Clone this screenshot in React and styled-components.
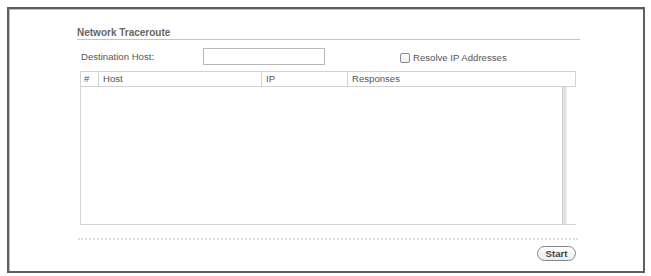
import React from "react";
import styled, { createGlobalStyle } from "styled-components";

const Global = createGlobalStyle`
  html, body { margin: 0; padding: 0; background: #fff; }
  body { font-family: "Liberation Sans", Arial, sans-serif; }
`;

const Frame = styled.div`
  margin: 7px 0 0 7px;
  width: 638px;
  height: 266px;
  box-sizing: border-box;
  border: 2px solid #5e5e5e;
  box-shadow: inset 1px 1px 0 #bdbdbd;
  padding: 18px 0 0 68px;
  background: #fff;
`;

const Section = styled.div`
  width: 503px;
  display: flex;
  flex-direction: column;
`;

const Title = styled.div`
  font-size: 10px;
  font-weight: bold;
  line-height: 12px;
  color: #666;
  border-bottom: 1px solid #c4c4c4;
`;

const FormRow = styled.div`
  margin-top: 8px;
  height: 17px;
  display: flex;
  align-items: center;
  padding-left: 4px;
`;

const Label = styled.span`
  width: 122px;
  font-size: 9.6px;
  color: #555;
`;

const TextInput = styled.input`
  width: 122px;
  height: 17px;
  box-sizing: border-box;
  border: 1px solid #b8b8b8;
  padding: 0;
  margin: 0;
  background: #fff;
  outline: none;
`;

const CheckLabel = styled.label`
  margin-left: 75px;
  display: flex;
  align-items: center;
  font-size: 9.6px;
  color: #555;
  margin-top: 2px;
`;

const CheckBox = styled.span`
  width: 10px;
  height: 10px;
  box-sizing: border-box;
  border: 1px solid #8a8a8a;
  border-radius: 2px;
  background: linear-gradient(#fff, #eee);
  margin-right: 3px;
`;

const Table = styled.div`
  margin-top: 6px;
  margin-left: 3px;
  width: 496px;
`;

const HeadRow = styled.div`
  display: flex;
  height: 16px;
  box-sizing: border-box;
  border: 1px solid #d2d2d2;
`;

const HeadCell = styled.div`
  width: ${(p) => (p.$w ? `${p.$w}px` : "auto")};
  flex: ${(p) => (p.$w ? "none" : "1")};
  box-sizing: border-box;
  border-left: ${(p) => (p.$first ? "none" : "1px solid #d2d2d2")};
  padding-left: ${(p) => (p.$first ? 3 : 4)}px;
  font-size: 9.6px;
  line-height: 14px;
  color: #555;
`;

const Body = styled.div`
  display: flex;
  height: 138px;
  box-sizing: border-box;
  border-left: 1px solid #d6d6d6;
  border-bottom: 1px solid #d6d6d6;
`;

const BodyArea = styled.div`
  flex: 1;
`;

const Scroll = styled.div`
  width: 5px;
  box-sizing: border-box;
  border-left: 1px solid #cfcfcf;
  background: linear-gradient(90deg, #dcdcdc, #ececec);
`;

const Spacer = styled.div`
  width: 9px;
`;

const Separator = styled.div`
  margin-top: 13px;
  margin-left: 1px;
  width: 500px;
  border-top: 2px dotted #dcdcdc;
`;

const ButtonRow = styled.div`
  width: 499px;
  display: flex;
  justify-content: flex-end;
  margin-top: 6px;
`;

const Button = styled.button`
  width: 39px;
  height: 15px;
  box-sizing: border-box;
  border: 1px solid #858585;
  border-radius: 8px;
  background: linear-gradient(#fff, #ececec);
  font-family: "Liberation Sans", Arial, sans-serif;
  font-size: 9.6px;
  font-weight: bold;
  color: #444;
  padding: 0;
  line-height: 13px;
`;

export default function App() {
  return (
    <>
      <Global />
      <Frame>
        <Section>
          <Title>Network Traceroute</Title>
          <FormRow>
            <Label>Destination Host:</Label>
            <TextInput />
            <CheckLabel>
              <CheckBox />
              Resolve IP Addresses
            </CheckLabel>
          </FormRow>
          <Table>
            <HeadRow>
              <HeadCell $w={17} $first>#</HeadCell>
              <HeadCell $w={163}>Host</HeadCell>
              <HeadCell $w={86}>IP</HeadCell>
              <HeadCell>Responses</HeadCell>
            </HeadRow>
            <Body>
              <BodyArea />
              <Scroll />
              <Spacer />
            </Body>
          </Table>
          <Separator />
          <ButtonRow>
            <Button>Start</Button>
          </ButtonRow>
        </Section>
      </Frame>
    </>
  );
}
